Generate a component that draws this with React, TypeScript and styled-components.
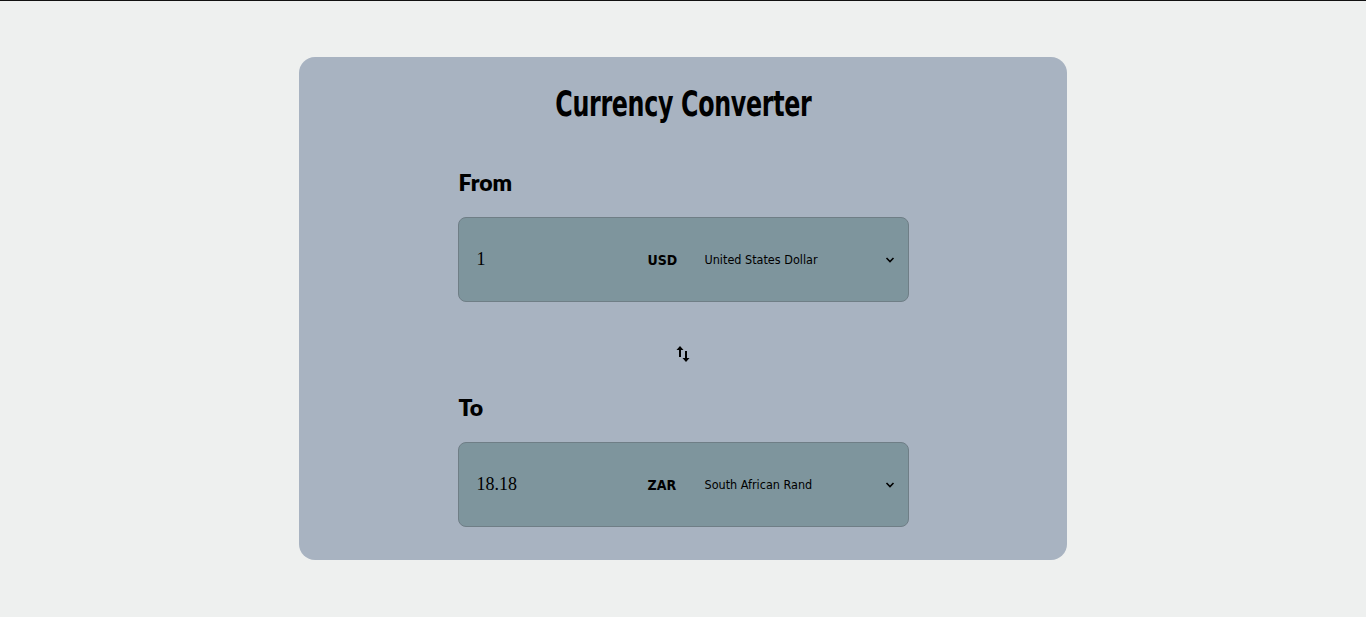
import React, { useState } from "react";
import styled, { createGlobalStyle } from "styled-components";

const Global = createGlobalStyle`
  html, body { margin: 0; padding: 0; }
  body {
    background: #eef0ef;
    border-top: 1px solid #111;
    min-height: 616px;
    box-sizing: border-box;
  }
`;

const Page = styled.main`
  display: flex;
  justify-content: center;
  padding-top: 56px;
`;

const Card = styled.section`
  width: 768px;
  height: 503px;
  box-sizing: border-box;
  background: #a8b3c1;
  border-radius: 16px;
  display: flex;
  flex-direction: column;
  align-items: center;
  padding-top: 26px;
`;

const Title = styled.h1`
  margin: 0;
  display: inline-block;
  font-family: "DejaVu Sans", sans-serif;
  font-weight: 700;
  font-size: 35px;
  letter-spacing: -0.5px;
  line-height: 42px;
  color: #000;
  transform: scaleX(0.68);
  white-space: nowrap;
`;

const Column = styled.div`
  width: 451px;
  display: flex;
  flex-direction: column;
`;

const Label = styled.h2<{ $top: number }>`
  margin: ${(p) => p.$top}px 0 0 1px;
  font-family: Lato, "Open Sans", sans-serif;
  font-weight: 800;
  font-size: 23px;
  line-height: 28px;
  color: #000;
`;

const Field = styled.div<{ $top: number }>`
  margin-top: ${(p) => p.$top}px;
  height: 85px;
  box-sizing: border-box;
  border: 1px solid #6f7e86;
  border-radius: 8px;
  background: #7e959d;
  display: flex;
  align-items: center;
  padding: 0 13px 0 18px;
`;

const Amount = styled.input`
  width: 150px;
  border: none;
  background: transparent;
  outline: none;
  padding: 0;
  font-family: "Liberation Serif", serif;
  font-size: 18px;
  color: #000;
`;

const Code = styled.span`
  margin-left: 21px;
  width: 57px;
  font-family: "DejaVu Sans Condensed", "DejaVu Sans", sans-serif;
  font-stretch: condensed;
  font-weight: 700;
  font-size: 14px;
  color: #000;
`;

const Name = styled.span`
  flex: 1;
  font-family: "DejaVu Sans Condensed", "DejaVu Sans", sans-serif;
  font-stretch: condensed;
  font-size: 12.5px;
  color: #000;
`;

const Chevron = styled.svg`
  width: 10px;
  height: 6px;
`;

const SwapButton = styled.button`
  align-self: center;
  margin-top: 43px;
  border: none;
  background: transparent;
  padding: 0;
  width: 16px;
  height: 18px;
  cursor: pointer;
  display: flex;
`;

function Row({ amount, code, name, top }: { amount: string; code: string; name: string; top: number }) {
  return (
    <Field $top={top}>
      <Amount defaultValue={amount} />
      <Code>{code}</Code>
      <Name>{name}</Name>
      <Chevron viewBox="0 0 10 6">
        <path d="M1.5 1 L5 4.5 L8.5 1" fill="none" stroke="#000" strokeWidth="1.6" />
      </Chevron>
    </Field>
  );
}

export default function App() {
  const [flip, setFlip] = useState(false);
  const a = { amount: "1", code: "USD", name: "United States Dollar" };
  const b = { amount: "18.18", code: "ZAR", name: "South African Rand" };
  const from = flip ? b : a;
  const to = flip ? a : b;
  return (
    <>
      <Global />
      <Page>
        <Card>
          <Title>Currency Converter</Title>
          <Column>
            <Label $top={43}>From</Label>
            <Row {...from} top={21} />
            <SwapButton onClick={() => setFlip(!flip)} aria-label="swap">
              <svg width="16" height="18" viewBox="0 0 16 18">
                <path d="M5 1 L1.5 5 H4 V12 H6 V5 H8.5 Z" fill="#000" />
                <path d="M11 17 L7.5 13 H10 V6 H12 V13 H14.5 Z" fill="#000" />
              </svg>
            </SwapButton>
            <Label $top={30}>To</Label>
            <Row {...to} top={21} />
          </Column>
        </Card>
      </Page>
    </>
  );
}
